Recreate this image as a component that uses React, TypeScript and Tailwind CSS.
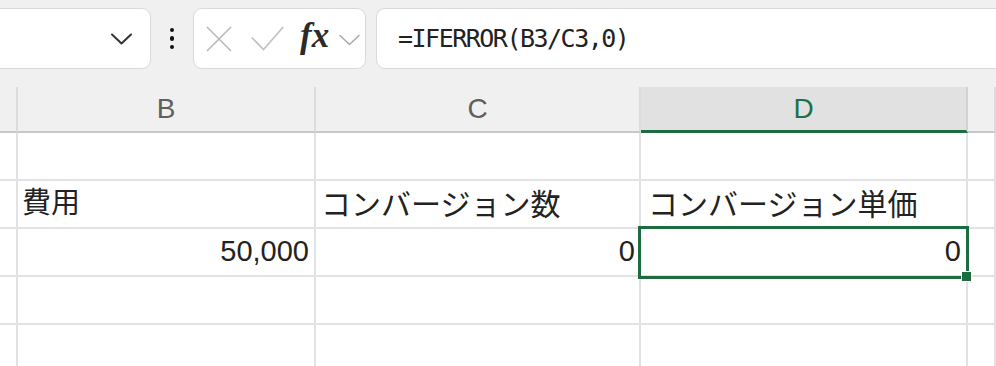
import React from "react";

const sans = "font-['Liberation_Sans','Noto_Sans_CJK_JP',sans-serif]";

function Chevron({ className, color, width }: { className?: string; color: string; width: number }) {
  return (
    <svg className={className} width="21" height="12" viewBox="0 0 21 12" fill="none">
      <polyline points="1,1.5 10.5,10.5 20,1.5" stroke={color} strokeWidth={width} strokeLinecap="round" strokeLinejoin="round" />
    </svg>
  );
}

function Toolbar() {
  return (
    <div className="h-[87px] flex items-start pt-[8px] bg-[#f0f0f0]">
      {/* Name box */}
      <div className="ml-[-12px] w-[163px] h-[61px] bg-white border border-[#d9d9d9] rounded-[9px] flex items-center justify-end pr-[18px]">
        <Chevron color="#333333" width={2} />
      </div>

      {/* More dots */}
      <div className="w-[42px] h-[61px] flex flex-col items-center justify-center gap-[4px]">
        <span className="w-[4.5px] h-[4.5px] rounded-full bg-[#111]" />
        <span className="w-[4.5px] h-[4.5px] rounded-full bg-[#111]" />
        <span className="w-[4.5px] h-[4.5px] rounded-full bg-[#111]" />
      </div>

      {/* Cancel / enter / fx */}
      <div className="w-[173px] h-[61px] bg-white border border-[#d9d9d9] rounded-[9px] flex items-center pl-[12px]">
        <svg width="26" height="26" viewBox="0 0 26 26" fill="none">
          <line x1="1" y1="1" x2="25" y2="25" stroke="#b8b8b8" strokeWidth="1.6" />
          <line x1="25" y1="1" x2="1" y2="25" stroke="#b8b8b8" strokeWidth="1.6" />
        </svg>
        <svg className="ml-[19px]" width="33" height="25" viewBox="0 0 33 25" fill="none">
          <polyline points="0.8,11.5 12.5,23.5 32.2,1" stroke="#c0c0c0" strokeWidth="1.6" />
        </svg>
        <span className="ml-[16px] w-[32px] text-[35px] leading-none italic font-bold text-[#2b2b2b] font-['Liberation_Serif',serif] -mt-[6px]">
          fx
        </span>
        <Chevron className="ml-[7px] mt-[2px]" color="#a8a8a8" width={1.5} />
      </div>

      {/* Formula bar */}
      <div className="ml-[10px] flex-1 mr-[-20px] h-[61px] bg-white border border-[#d9d9d9] rounded-[9px] flex items-center pl-[21px]">
        <span className="text-[25px] tracking-[-1.5px] text-[#222] font-['DejaVu_Sans_Mono',monospace]">
          =IFERROR(B3/C3,0)
        </span>
      </div>
    </div>
  );
}

const cell = "h-[48px] border-r-2 border-b-2 border-[#e2e2e2] flex items-center overflow-visible whitespace-nowrap";

export default function App() {
  const headers = [
    { key: "row", label: "", active: false },
    { key: "B", label: "B", active: false },
    { key: "C", label: "C", active: false },
    { key: "D", label: "D", active: true },
    { key: "E", label: "", active: false },
  ];

  return (
    <div className={`w-[996px] h-[366px] overflow-hidden bg-white ${sans}`}>
      <Toolbar />

      <div className="grid grid-cols-[18px_298px_325px_327px_1fr]">
        {/* Column headers */}
        {headers.map((h) =>
          h.active ? (
            <div
              key={h.key}
              className="h-[46px] bg-[#e1e1e1] border-r-2 border-r-[#d2d2d2] border-b-[3px] border-b-[#1e6b40] flex items-center justify-center text-[28px] text-[#1e7145]"
            >
              {h.label}
            </div>
          ) : (
            <div
              key={h.key}
              className="h-[46px] bg-[#f0f0f0] border-r-2 border-r-[#dcdcdc] border-b-2 border-b-[#c8c8c8] flex items-center justify-center text-[28px] text-[#5f5f5f]"
            >
              {h.label}
            </div>
          )
        )}

        {/* Row 1 */}
        <div className={cell} />
        <div className={cell} />
        <div className={cell} />
        <div className={cell} />
        <div className={`${cell} border-r-0`} />

        {/* Row 2 */}
        <div className={cell} />
        <div className={`${cell} pl-[4px] text-[29px] text-[#222]`}>費用</div>
        <div className={`${cell} pl-[5px] text-[30px] text-[#222]`}>コンバージョン数</div>
        <div className={`${cell} pl-[7px] text-[30px] text-[#222]`}>コンバージョン単価</div>
        <div className={`${cell} border-r-0`} />

        {/* Row 3 */}
        <div className={cell} />
        <div className={`${cell} justify-end pr-[5px] text-[29px] text-[#222]`}>50,000</div>
        <div className={`${cell} justify-end pr-[4px] text-[29px] text-[#222]`}>0</div>
        <div className={`${cell} relative justify-end pr-[5px] text-[29px] text-[#222]`}>
          0
          <div className="absolute -left-[3px] -top-[3px] -right-[3px] -bottom-[4px] border-[3px] border-[#1e6b40] pointer-events-none" />
          <div className="absolute -right-[6px] -bottom-[7px] w-[11px] h-[11px] bg-[#1e6b40] border border-white" />
        </div>
        <div className={`${cell} border-r-0`} />

        {/* Row 4 */}
        <div className={cell} />
        <div className={cell} />
        <div className={cell} />
        <div className={cell} />
        <div className={`${cell} border-r-0`} />

        {/* Row 5 */}
        <div className={cell} />
        <div className={cell} />
        <div className={cell} />
        <div className={cell} />
        <div className={`${cell} border-r-0`} />
      </div>
    </div>
  );
}
